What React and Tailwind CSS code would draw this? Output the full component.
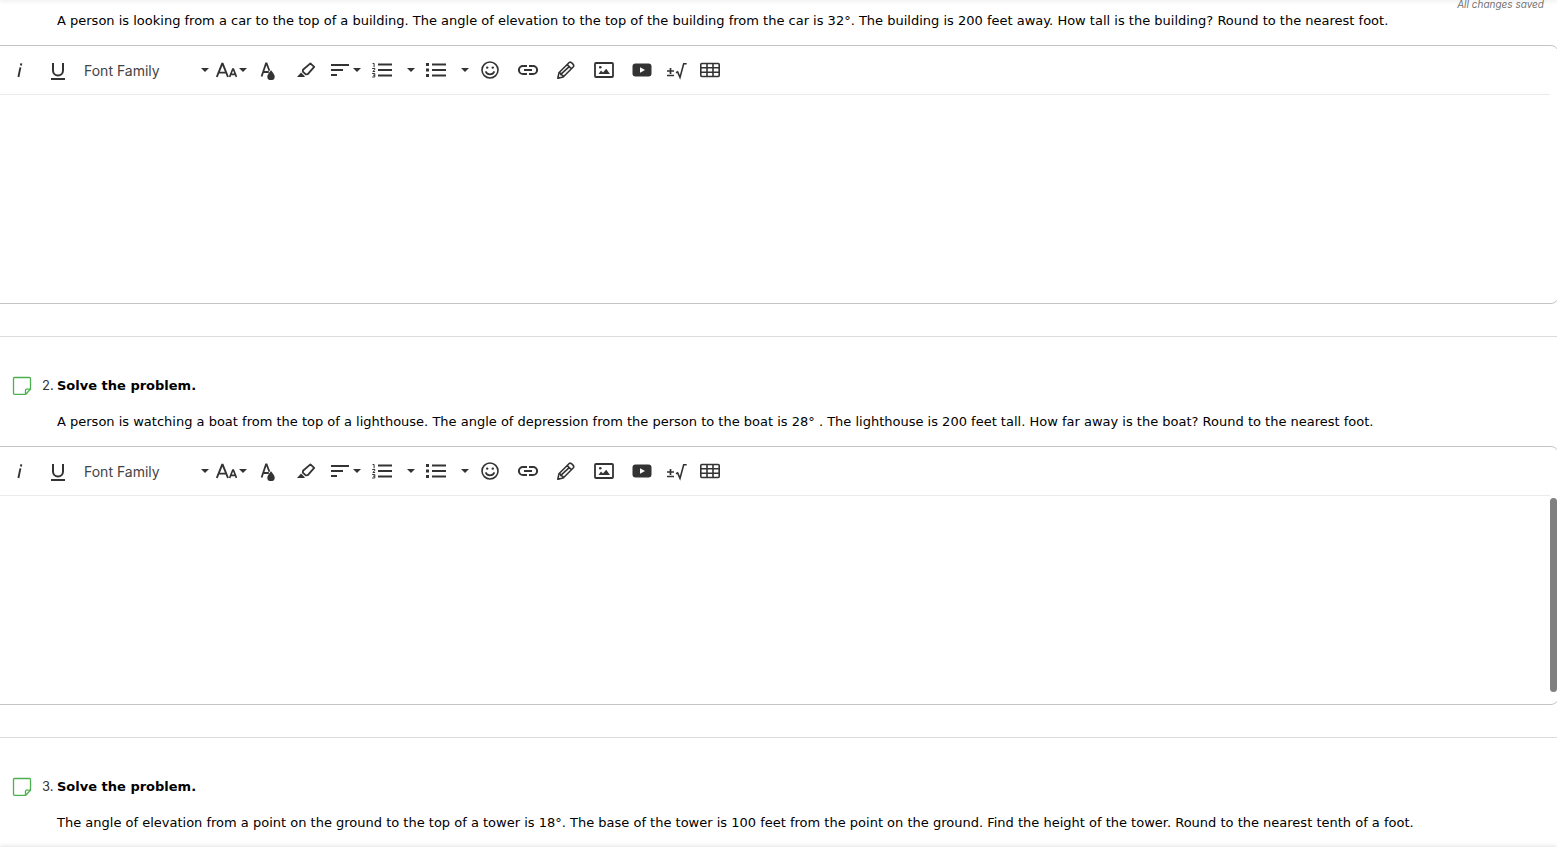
import React, { useState } from 'react';

const questions = [
  {
    id: 1,
    prompt:
      'A person is looking from a car to the top of a building. The angle of elevation to the top of the building from the car is 32°. The building is 200 feet away. How tall is the building? Round to the nearest foot.',
  },
  {
    id: 2,
    title: 'Solve the problem.',
    prompt:
      'A person is watching a boat from the top of a lighthouse. The angle of depression from the person to the boat is 28° . The lighthouse is 200 feet tall. How far away is the boat? Round to the nearest foot.',
  },
  {
    id: 3,
    title: 'Solve the problem.',
    prompt:
      'The angle of elevation from a point on the ground to the top of a tower is 18°. The base of the tower is 100 feet from the point on the ground. Find the height of the tower. Round to the nearest tenth of a foot.',
  },
];

const Caret = () => (
  <svg width="8" height="4" viewBox="0 0 8 4" fill="currentColor" aria-hidden="true">
    <path d="M0 0h8L4 4z" />
  </svg>
);

const Icon = ({ children, width = 20 }) => (
  <svg
    width={width}
    height="20"
    viewBox={`0 0 ${width} 20`}
    fill="none"
    stroke="currentColor"
    strokeWidth="2"
    aria-hidden="true"
  >
    {children}
  </svg>
);

const ToolButton = ({ label, className = 'w-[38px] justify-center', children }) => (
  <button type="button" aria-label={label} title={label} className={`flex h-10 shrink-0 items-center ${className}`}>
    {children}
  </button>
);

const ListButton = ({ label, children }) => (
  <ToolButton label={label} className="w-[54px] justify-between pr-0.5 pl-[9px]">
    {children}
    <Caret />
  </ToolButton>
);

const ListLines = () => <path d="M6 4.5h14M6 10h14M6 15.5h14" />;

const Toolbar = ({ id }) => (
  <div className="mr-2 flex h-[49px] items-center border-b border-[#ebebeb] pl-px text-[#333]">
    <ToolButton label="Italic">
      <Icon>
        <path d="M10.4 7.4 8.400 17" strokeWidth="1.9" />
        <path d="M11.3 3.400 10.900 5.500" strokeWidth="2" />
      </Icon>
    </ToolButton>
    <ToolButton label="Underline">
      <Icon>
        <path d="M5 3v7.400a5 5 0 0 0 10 0V3" strokeWidth="2" />
        <path d="M3 19h14" strokeWidth="2" />
      </Icon>
    </ToolButton>

    <div className="relative flex h-10 w-[135px] shrink-0 items-center">
      <select
        id={`font-${id}`}
        aria-label="Font Family"
        defaultValue=""
        className="h-10 w-full appearance-none bg-transparent pt-0.5 pl-[7px] text-sm text-[#444]"
      >
        <option value="">Font Family</option>
        <option value="arial">Arial</option>
        <option value="verdana">Verdana</option>
      </select>
      <span className="pointer-events-none absolute right-[3px]">
        <Caret />
      </span>
    </div>

    <ToolButton label="Font Size" className="w-[37px] gap-0.5 pl-1">
      <Icon width={21}>
        <path d="M.8 17 6.1 3.8h.6L12 17M2.8 12.600h7.200" strokeWidth="1.9" />
        <path d="m13.600 17 3.200-8h.6l3.100 8M14.800 14.400h4.500" strokeWidth="1.7" />
      </Icon>
      <Caret />
    </ToolButton>
    <ToolButton label="Text Color">
      <Icon>
        <path d="M3.6 16.500 8 3.400h.6l2.800 7.400M5.200 12H10.800" strokeWidth="1.8" />
        <path
          d="M13 11.200c-1.600 2.200-3.700 4.200-3.700 6.200a3.700 3.700 0 0 0 7.400 0c0-2-2.100-4-3.700-6.200z"
          fill="currentColor"
          stroke="none"
          transform="translate(0 -1)"
        />
      </Icon>
    </ToolButton>
    <ToolButton label="Highlight">
      <Icon>
        <path d="m7 9.800 7.400-6.400 3.800 3.400-6.400 7.400-2 .2L6.800 11.600z" strokeWidth="1.8" strokeLinejoin="round" />
        <path d="m5 12.600 4 3.800-1 .6H1z" fill="currentColor" stroke="none" />
      </Icon>
    </ToolButton>
    <ToolButton label="Align" className="w-[38px] gap-[3px] pl-1.5">
      <Icon width={19}>
        <path d="M0 5h18M0 10h12M0 15h6" />
      </Icon>
      <Caret />
    </ToolButton>
    <ListButton label="Ordered List">
      <Icon>
        <ListLines />
        <path d="M.6 3.500h1.500v3.700M.2 8.500h2.700v1L.8 11.500h2.300M.2 13.500h2.600v3.500H.2M1 15.200h1.800" strokeWidth="1" />
      </Icon>
    </ListButton>
    <ListButton label="Unordered List">
      <Icon>
        <ListLines />
        <path d="M0 4.500h3M0 10h3M0 15.500h3" strokeWidth="3" />
      </Icon>
    </ListButton>
    <ToolButton label="Emoticons">
      <Icon>
        <circle cx="10" cy="10" r="8" strokeWidth="1.6" />
        <path d="M5.6 11.4c1.6 4 7.2 4 8.8 0" strokeWidth="1.6" />
        <circle cx="7.2" cy="7.6" r="1.2" fill="currentColor" stroke="none" />
        <circle cx="12.8" cy="7.6" r="1.2" fill="currentColor" stroke="none" />
      </Icon>
    </ToolButton>
    <ToolButton label="Insert Link">
      <Icon>
        <path d="M9 5.9H5a4.1 4.1 0 0 0 0 8.2h4M11 5.9h4a4.1 4.1 0 0 1 0 8.2h-4M6 10h8" strokeWidth="2" />
      </Icon>
    </ToolButton>
    <ToolButton label="Draw">
      <Icon>
        <path
          d="m1.9 18.2 1-5.4L13.2 2.5c1.4-1.4 5.6 2.4 4.2 4.2L7.2 17zM3 12.8c1.6-.2 1.9.6 1.8 1.8 1.4 0 2.3.6 2.4 2.2M11.2 4.6l4.2 4.2M4.8 14.4l8.4-7.8"
          strokeWidth="1.6"
          strokeLinejoin="round"
        />
        <path d="m1.5 18.6.5-3 2.3 2.4z" fill="currentColor" stroke="none" />
      </Icon>
    </ToolButton>
    <ToolButton label="Insert Image">
      <Icon>
        <rect x="1" y="3" width="18" height="14" rx="1" strokeWidth="1.8" />
        <circle cx="6.3" cy="7.300" r="1.3" fill="currentColor" stroke="none" />
        <path d="m4.500 14 2.500-3.600 2 2 3.200-3.700 3.800 5.300z" fill="currentColor" stroke="none" />
      </Icon>
    </ToolButton>
    <ToolButton label="Insert Video">
      <Icon>
        <rect x="0.5" y="3.5" width="19" height="13" rx="3" fill="currentColor" stroke="none" />
        <path d="m8 7.2 5 2.8-5 2.8z" fill="#fff" stroke="none" />
      </Icon>
    </ToolButton>
    <ToolButton label="Insert Formula" className="w-[30px] justify-center">
      <Icon width={22}>
        <path d="M2 11h7M5.500 8v6M2 15.500h7" strokeWidth="1.7" />
        <path d="m11 12.700 1.600-.8 2.400 5.500L18.700 3.800h3" strokeWidth="1.600" />
      </Icon>
    </ToolButton>
    <ToolButton label="Insert Table">
      <Icon>
        <rect x="0.8" y="3.500" width="18.4" height="13" rx="1" strokeWidth="1.600" />
        <path d="M.8 7.800h18.400M.8 12.200h18.400M7 3.500v13M13 3.500v13" strokeWidth="1.600" />
      </Icon>
    </ToolButton>
  </div>
);

const Editor = ({ id, label }) => {
  const [answer, setAnswer] = useState('');

  return (
    <div className="-mr-0.5 -ml-3 rounded-lg border border-[#c4c4c4] pl-[11px]">
      <Toolbar id={id} />
      <textarea
        aria-label={label}
        value={answer}
        onChange={(event) => setAnswer(event.target.value)}
        className="block h-52 w-full resize-none bg-transparent px-4 py-3 text-sm outline-none"
      />
    </div>
  );
};

const NoteIcon = () => (
  <svg width="20" height="20" viewBox="0 0 20 20" fill="none" stroke="#4caf50" strokeWidth="1.3" aria-hidden="true">
    <path d="M2.5 1.5h15a1 1 0 0 1 1 1v10.8l-4.8 5H2.5a1 1 0 0 1-1-1V2.5a1 1 0 0 1 1-1z" strokeLinejoin="round" />
    <path d="M18.5 13.2h-4a1 1 0 0 0-1 1v4" />
  </svg>
);

const Question = ({ id, title, prompt }) => (
  <section className={title ? 'border-t border-[#dcdcdc] pt-[37px]' : ''}>
    {title && (
      <div className="mb-3 flex h-6 items-center pl-3">
        <button type="button" aria-label={`Add note to question ${id}`}>
          <NoteIcon />
        </button>
        <span className="w-[25px] pl-2.5 text-[13px] text-[#333]">{id}.</span>
        <h2 className="font-['DejaVu_Sans'] text-[13px] font-bold text-black">{title}</h2>
      </div>
    )}
    <p className="mb-3 pl-[57px] font-['DejaVu_Sans'] text-[13px] leading-6 whitespace-nowrap text-black">
      {prompt}
    </p>
    <Editor id={id} label={`Answer to question ${id}`} />
    <div className="h-8" />
  </section>
);

const App = () => (
  <div className="relative flex h-screen flex-col overflow-hidden bg-white font-[Inter,sans-serif]">
    <header className="z-10 h-0 shadow-[0_0_4px_1px_rgba(0,0,0,0.12)]" />
    <main className="min-h-0 flex-1 overflow-hidden">
      <p className="h-[9px] pr-[13px] text-right text-[10px] leading-2 text-[#757575] italic">All changes saved</p>
      {questions.map((question) => (
        <Question key={question.id} {...question} />
      ))}
    </main>
    <footer className="z-10 h-[3px] bg-white shadow-[0_0_5px_rgba(0,0,0,0.2)]" />
    <div className="absolute top-[498px] right-0 h-[194px] w-[7px] rounded-full bg-[#808080]" />
  </div>
);

export default App;
